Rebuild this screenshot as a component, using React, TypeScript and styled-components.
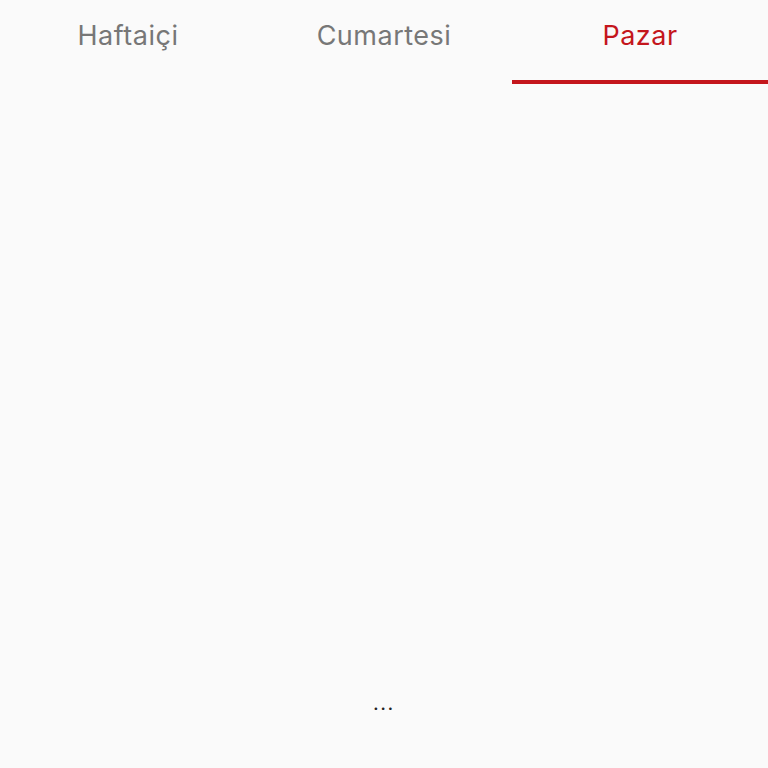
import styled, { createGlobalStyle } from 'styled-components';

const GlobalStyle = createGlobalStyle`
  html, body {
    margin: 0;
    padding: 0;
    background: #fafafa;
  }
  body {
    font-family: Inter, "Liberation Sans", sans-serif;
  }
`;

const tabs = ['Haftaiçi', 'Cumartesi', 'Pazar'];

const App = () => {
    const active = 2;

    return (
        <>
            <GlobalStyle />
            <Page>
                <TabBar>
                    {tabs.map((t, i) => (
                        <Tab key={t} active={i === active}>{t}</Tab>
                    ))}
                </TabBar>
                <Content>
                    <Loading>...</Loading>
                </Content>
            </Page>
        </>
    );
}

export default App;

const Page = styled.div`
  display: flex;
  flex-direction: column;
  height: 768px;
  background: #fafafa;
`

const TabBar = styled.div`
  display: grid;
  grid-template-columns: repeat(3, 1fr);
  height: 84px;
`

interface TabProp {
    active: boolean,
}

const Tab = styled.div<TabProp>`
  display: flex;
  justify-content: center;
  align-items: flex-start;
  padding-top: 19px;
  box-sizing: border-box;
  font-size: 27px;
  font-weight: 400;
  letter-spacing: 0.5px;
  color: ${props => props.active ? '#c4161c' : '#777777'};
  border-bottom: 4px solid ${props => props.active ? '#c4161c' : 'transparent'};
`

const Content = styled.div`
  flex: 1;
  display: flex;
  justify-content: center;
  align-items: flex-end;
  padding-bottom: 53px;
`

const Loading = styled.span`
  font-size: 20px;
  color: #222;
  letter-spacing: 1.5px;
`
